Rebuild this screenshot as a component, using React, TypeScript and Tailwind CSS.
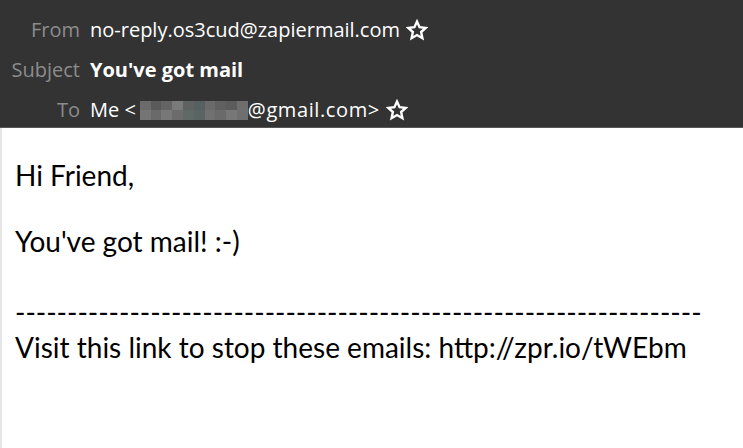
import React from 'react';

const blur = [
  ['#6b6b6b', '#5a5a5a', '#646464', '#7a7a7a', '#5e6362', '#566060', '#6a6a6a', '#606060', '#5c5c5c', '#6e6e6e'],
  ['#757575', '#6a6a6a', '#787878', '#6c6c6c', '#5f6966', '#5a6463', '#707070', '#6a6a6a', '#777777', '#6f6f6f'],
];

function Star() {
  return (
    <svg width="22" height="22" viewBox="0 0 24 24" fill="none" stroke="#ffffff" strokeWidth="2.6" strokeLinejoin="miter">
      <path d="M12 2.8l2.8 6.2 6.7.7-5 4.5 1.4 6.7L12 17.5l-5.9 3.4 1.4-6.7-5-4.5 6.7-.7z" />
    </svg>
  );
}

function HeaderRow({ label, children }: { label: string; children: React.ReactNode }) {
  return (
    <div className="flex items-center h-[40px]">
      <div className="w-[80px] text-right text-[#8c8c8c]">{label}</div>
      <div className="ml-[10px] flex items-center text-white">{children}</div>
    </div>
  );
}

export default function App() {
  return (
    <div className="w-[743px] h-[448px] bg-white overflow-hidden">
      <div
        className="bg-[#333333] border-b border-[#575757] pt-[10px] h-[128px] text-[20px]"
        style={{ fontFamily: '"Open Sans", "Noto Sans", sans-serif' }}
      >
        <HeaderRow label="From">
          <span>no-reply.os3cud@zapiermail.com</span>
          <span className="ml-[6px]"><Star /></span>
        </HeaderRow>
        <HeaderRow label="Subject">
          <span className="font-bold">You've got mail</span>
        </HeaderRow>
        <HeaderRow label="To">
          <span>Me &lt;</span>
          <span className="ml-[4px] flex flex-col w-[108px] h-[19px]">
            {blur.map((row, i) => (
              <span key={i} className="flex flex-1">
                {row.map((c, j) => (
                  <span key={j} className="flex-1" style={{ backgroundColor: c }} />
                ))}
              </span>
            ))}
          </span>
          <span className="tracking-[0.6px]">@gmail.com&gt;</span>
          <span className="ml-[6px]"><Star /></span>
        </HeaderRow>
      </div>
      <div
        className="border-l-2 border-[#e6e6e6] h-[320px] pl-[13px] pt-[27px] text-[28px] leading-[40px] text-black"
        style={{ fontFamily: 'Lato, "Open Sans", sans-serif' }}
      >
        <p>Hi Friend,</p>
        <p className="mt-[26px]">You've got mail! :-)</p>
        <p className="mt-[31px] h-[35px] whitespace-nowrap">{'-'.repeat(66)}</p>
        <p className="whitespace-nowrap">Visit this link to stop these emails: http://zpr.io/tWEbm</p>
      </div>
    </div>
  );
}
